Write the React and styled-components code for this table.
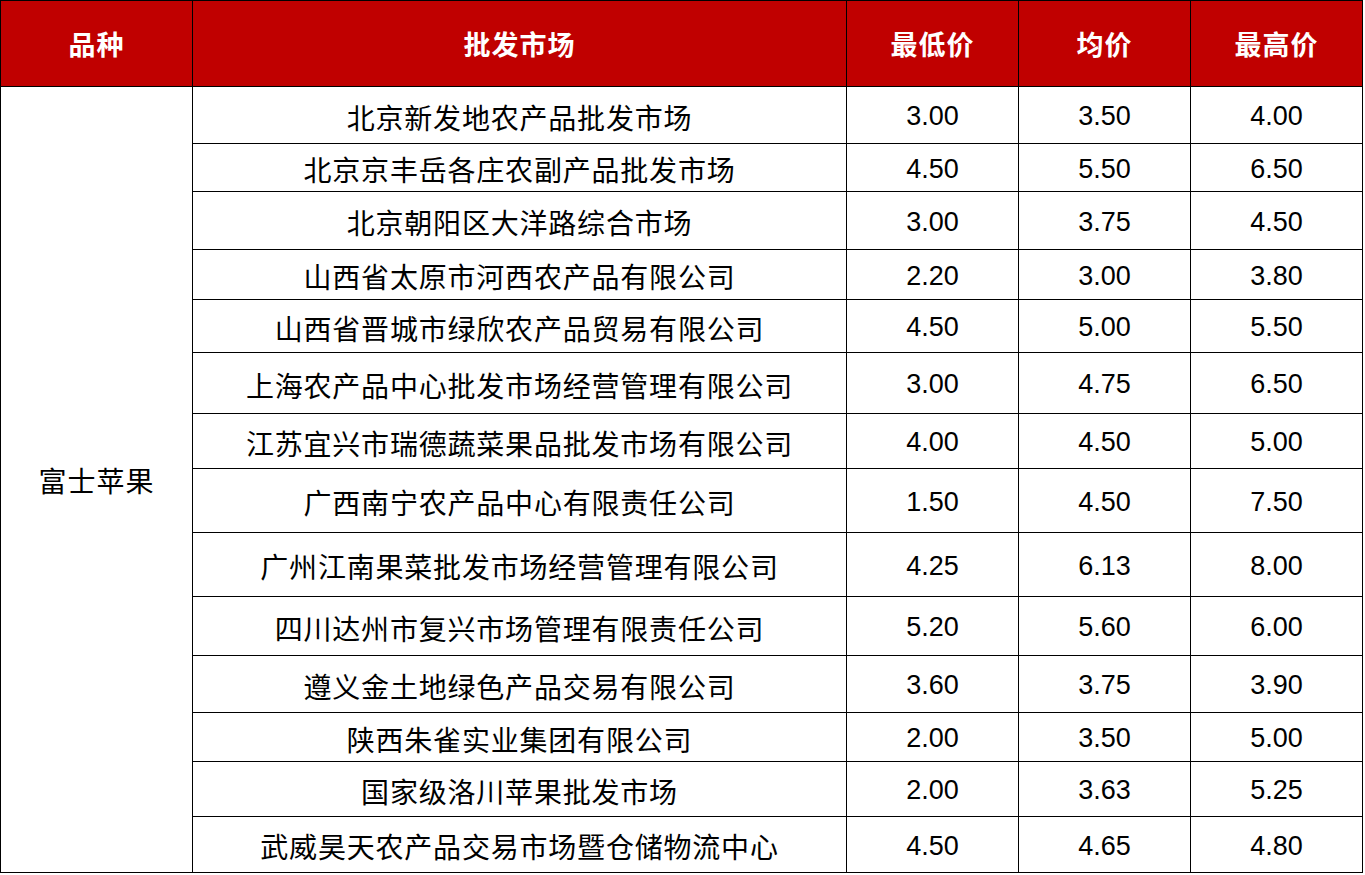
import React from 'react';
import styled, { createGlobalStyle } from 'styled-components';

const Global = createGlobalStyle`
  html, body {
    margin: 0;
    padding: 0;
    background: #fff;
  }
`;

const Table = styled.table`
  border-collapse: collapse;
  table-layout: fixed;
  width: 1363px;
  font-family: "Noto Sans CJK SC", "Liberation Sans", sans-serif;
  color: #000;
`;

const Head = styled.th`
  background: #c00000;
  color: #fff;
  height: 85px;
  padding: 0;
  border: 1px solid #000;
  font-size: 27px;
  font-weight: 700;
  letter-spacing: 1px;
  text-align: center;
  vertical-align: middle;
`;

const Row = styled.tr`
  height: ${p => p.h}px;
`;

const Kind = styled.td`
  border: 1px solid #000;
  padding: 0;
  text-align: center;
  vertical-align: middle;
  font-size: 28px;
  letter-spacing: 1px;
`;

const Market = styled.td`
  border: 1px solid #000;
  padding: 3px 0 0;
  text-align: center;
  vertical-align: middle;
  font-size: 28px;
  letter-spacing: 0.8px;
  white-space: nowrap;
`;

const Price = styled.td`
  border: 1px solid #000;
  padding: 3px 0 0;
  text-align: center;
  vertical-align: middle;
  font-family: "Liberation Sans", Arial, sans-serif;
  font-size: 27px;
`;

const rows = [
  ['北京新发地农产品批发市场', '3.00', '3.50', '4.00', 57],
  ['北京京丰岳各庄农副产品批发市场', '4.50', '5.50', '6.50', 48],
  ['北京朝阳区大洋路综合市场', '3.00', '3.75', '4.50', 58],
  ['山西省太原市河西农产品有限公司', '2.20', '3.00', '3.80', 50],
  ['山西省晋城市绿欣农产品贸易有限公司', '4.50', '5.00', '5.50', 53],
  ['上海农产品中心批发市场经营管理有限公司', '3.00', '4.75', '6.50', 61],
  ['江苏宜兴市瑞德蔬菜果品批发市场有限公司', '4.00', '4.50', '5.00', 55],
  ['广西南宁农产品中心有限责任公司', '1.50', '4.50', '7.50', 64],
  ['广州江南果菜批发市场经营管理有限公司', '4.25', '6.13', '8.00', 64],
  ['四川达州市复兴市场管理有限责任公司', '5.20', '5.60', '6.00', 59],
  ['遵义金土地绿色产品交易有限公司', '3.60', '3.75', '3.90', 57],
  ['陕西朱雀实业集团有限公司', '2.00', '3.50', '5.00', 49],
  ['国家级洛川苹果批发市场', '2.00', '3.63', '5.25', 55],
  ['武威昊天农产品交易市场暨仓储物流中心', '4.50', '4.65', '4.80', 56],
];

export default function App() {
  return (
    <>
      <Global />
      <Table>
        <colgroup>
          <col style={{ width: 192 }} />
          <col style={{ width: 654 }} />
          <col style={{ width: 172 }} />
          <col style={{ width: 172 }} />
          <col style={{ width: 172 }} />
        </colgroup>
        <thead>
          <tr>
            <Head>品种</Head>
            <Head>批发市场</Head>
            <Head>最低价</Head>
            <Head>均价</Head>
            <Head>最高价</Head>
          </tr>
        </thead>
        <tbody>
          {rows.map(([name, lo, avg, hi, h], i) => (
            <Row key={name} h={h}>
              {i === 0 && <Kind rowSpan={rows.length}>富士苹果</Kind>}
              <Market>{name}</Market>
              <Price>{lo}</Price>
              <Price>{avg}</Price>
              <Price>{hi}</Price>
            </Row>
          ))}
        </tbody>
      </Table>
    </>
  );
}
